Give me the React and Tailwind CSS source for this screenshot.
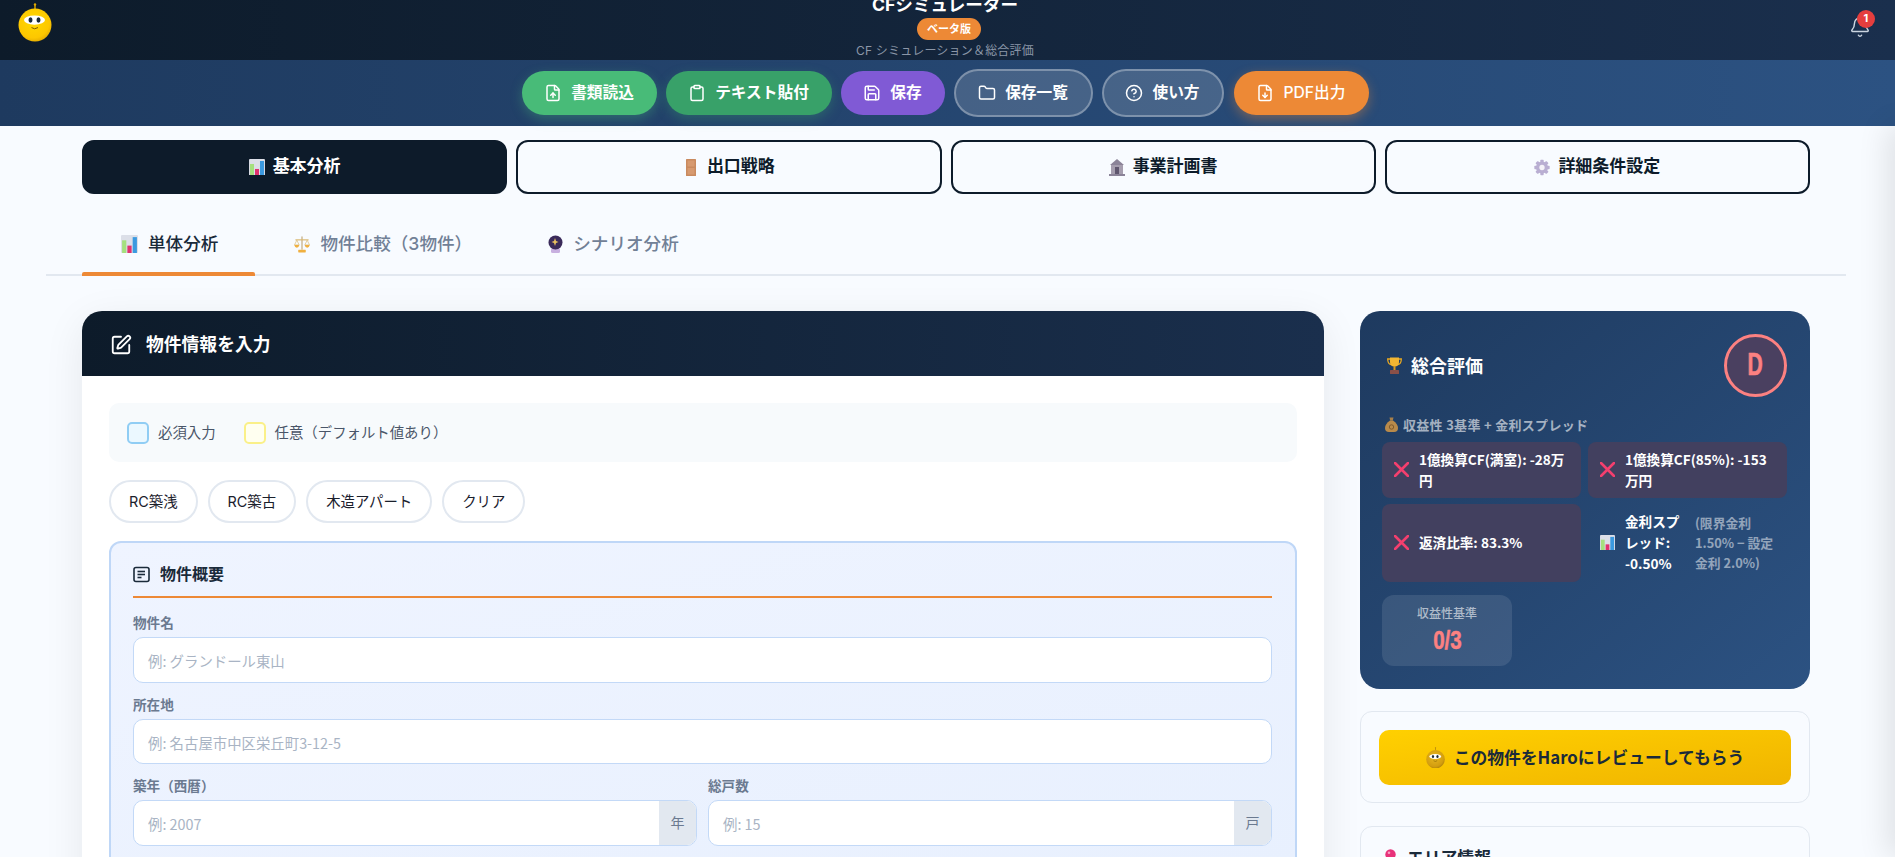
import React from "react";
import { FileUp, Clipboard, Save, Folder, CircleHelp, FileDown, Bell, SquarePen } from "lucide-react";

const jp = "font-['Inter','Noto_Sans_CJK_JP',sans-serif]";
const noto = "font-['Noto_Sans_CJK_JP',sans-serif]";
const narrow = "font-['Liberation_Sans',sans-serif]";

function Haro({ size = 34, dark = false }) {
  const id = dark ? "haroD" : "haroL";
  return (
    <svg width={size} height={size * 1.15} viewBox="0 0 34 39" aria-hidden="true">
      <defs>
        <radialGradient id={id} cx="0.45" cy="0.4" r="0.65">
          <stop offset="0" stopColor={dark ? "#e8b820" : "#ffd900"} />
          <stop offset="0.75" stopColor={dark ? "#d39d10" : "#fdc700"} />
          <stop offset="1" stopColor={dark ? "#a87c0a" : "#e0a800"} />
        </radialGradient>
      </defs>
      <line x1="17" y1="1" x2="17" y2="6" stroke={dark ? "#b88a10" : "#e0a800"} strokeWidth="1.4" />
      <circle cx="17" cy="1.5" r="1.2" fill={dark ? "#b88a10" : "#e0a800"} />
      <circle cx="17" cy="22" r="16.5" fill={`url(#${id})`} />
      <ellipse cx="16.5" cy="17" rx="10.5" ry="4.6" fill="#fff" />
      <ellipse cx="12.5" cy="17" rx="2" ry="2.7" fill="#1a2a3a" />
      <ellipse cx="20.5" cy="17" rx="2" ry="2.7" fill="#1a2a3a" />
      <path d="M13.5 24.5 Q16.5 27 20 24.5" stroke="#7a5a00" strokeWidth="1" fill="none" />
    </svg>
  );
}

function ChartIcon({ w = 16 }) {
  return (
    <svg width={w} height={w * 1.06} viewBox="0 0 16 17" className="shrink-0" aria-hidden="true">
      <rect x="0" y="0" width="16" height="17" rx="1" fill="#dcdfe8" />
      <rect x="1" y="5" width="4" height="12" fill="#a5e07e" />
      <rect x="6" y="10" width="4" height="7" fill="#e0326f" />
      <rect x="11" y="2" width="4" height="15" fill="#3b9ae0" />
    </svg>
  );
}

function DoorIcon() {
  return (
    <svg width="16" height="17" viewBox="0 0 16 17" className="shrink-0" aria-hidden="true">
      <rect x="3" width="10" height="17" rx="0.5" fill="#c98a5f" />
      <rect x="4.5" y="1.5" width="7" height="6" fill="#d79a70" />
      <rect x="4.5" y="9" width="7" height="6.5" fill="#d79a70" />
    </svg>
  );
}

function BankIcon() {
  return (
    <svg width="16" height="17" viewBox="0 0 16 17" className="shrink-0" aria-hidden="true">
      <path d="M8 0 L15 6 H1 Z" fill="#8b8398" />
      <rect x="2" y="6" width="12" height="9" fill="#a59dae" />
      <rect x="6" y="8" width="4" height="7" fill="#5f566e" />
      <rect x="0" y="15" width="16" height="2" fill="#8b8398" />
    </svg>
  );
}

function GearIcon() {
  return (
    <svg width="16" height="17" viewBox="0 0 24 24" className="shrink-0" aria-hidden="true">
      <g fill="#b9aed2">
        <circle cx="12" cy="12" r="9" />
        <rect x="9.5" y="0.5" width="5" height="23" rx="1" />
        <rect x="9.5" y="0.5" width="5" height="23" rx="1" transform="rotate(45 12 12)" />
        <rect x="9.5" y="0.5" width="5" height="23" rx="1" transform="rotate(90 12 12)" />
        <rect x="9.5" y="0.5" width="5" height="23" rx="1" transform="rotate(135 12 12)" />
      </g>
      <circle cx="12" cy="12" r="4" fill="#f4f2f8" />
    </svg>
  );
}

function ScaleIcon() {
  return (
    <svg width="16" height="18" viewBox="0 0 17 18" className="shrink-0" aria-hidden="true">
      <rect x="7.8" y="1" width="1.4" height="14" fill="#c9b28a" />
      <rect x="1.5" y="4" width="14" height="1.2" fill="#d9b770" />
      <path d="M3 5 L0.5 10 H5.5 Z" fill="none" stroke="#d9b770" strokeWidth="0.7" />
      <path d="M14 5 L11.5 10 H16.5 Z" fill="none" stroke="#d9b770" strokeWidth="0.7" />
      <path d="M0.3 10 H5.7 Q5 13 3 13 Q1 13 0.3 10 Z" fill="#f0b040" />
      <path d="M11.3 10 H16.7 Q16 13 14 13 Q12 13 11.3 10 Z" fill="#f0b040" />
      <rect x="4.5" y="15" width="8" height="3" rx="0.5" fill="#f0b040" />
    </svg>
  );
}

function BallIcon() {
  return (
    <svg width="15" height="18" viewBox="0 0 15 18" className="shrink-0" aria-hidden="true">
      <rect x="3" y="13" width="9" height="5" rx="1.5" fill="#c8b0e0" />
      <circle cx="7.5" cy="7.5" r="7" fill="#3a2a5a" />
      <path d="M7 3 L8 6 L10.5 7 L8 8 L7 11 L6 8 L3.5 7 L6 6 Z" fill="#e8c060" />
    </svg>
  );
}

function TrophyIcon() {
  return (
    <svg width="15" height="17" viewBox="0 0 15 17" className="shrink-0" aria-hidden="true">
      <path d="M3 2 H0.7 Q0.7 7 4 7.5" fill="none" stroke="#e8a820" strokeWidth="1.3" />
      <path d="M12 2 H14.3 Q14.3 7 11 7.5" fill="none" stroke="#e8a820" strokeWidth="1.3" />
      <path d="M3 0.5 H12 V5 Q12 9.5 7.5 9.5 Q3 9.5 3 5 Z" fill="#f2b632" />
      <rect x="6.5" y="9" width="2" height="4" fill="#d89a20" />
      <rect x="3" y="13" width="9" height="4" rx="0.5" fill="#8a5048" />
    </svg>
  );
}

function BagIcon() {
  return (
    <svg width="13" height="15" viewBox="0 0 13 15" className="shrink-0" aria-hidden="true">
      <path d="M4.5 0.5 H8.5 L7.8 3.5 H5.2 Z" fill="#a8804a" />
      <path d="M5 3.5 H8 Q13 7 13 11 Q13 15 9 15 H4 Q0 15 0 11 Q0 7 5 3.5 Z" fill="#b98a4a" />
      <circle cx="6.5" cy="10" r="2.2" fill="none" stroke="#7a5528" strokeWidth="0.9" />
    </svg>
  );
}

function PinIcon() {
  return (
    <svg width="11" height="18" viewBox="0 0 11 18" className="shrink-0" aria-hidden="true">
      <line x1="5.5" y1="9" x2="5.5" y2="18" stroke="#9aa3b0" strokeWidth="1.4" />
      <circle cx="5.5" cy="5.5" r="5.2" fill="#e8327a" />
      <circle cx="4" cy="3.8" r="1.3" fill="#f8a0c4" />
    </svg>
  );
}

function OutlineIcon() {
  return (
    <svg width="17" height="17" viewBox="0 0 17 17" fill="none" stroke="#1a2a3a" strokeWidth="1.6" className="shrink-0" aria-hidden="true">
      <rect x="1" y="1.5" width="15" height="14" rx="2" />
      <line x1="4.5" y1="5.5" x2="12" y2="5.5" />
      <line x1="4.5" y1="8.5" x2="12" y2="8.5" />
      <line x1="4.5" y1="11.5" x2="8.5" y2="11.5" />
    </svg>
  );
}

function Cross() {
  return (
    <svg width="15" height="15" viewBox="0 0 15 15" className="shrink-0" aria-hidden="true">
      <path d="M1 1 L14 14 M14 1 L1 14" stroke="#f43f6e" strokeWidth="2.6" strokeLinecap="round" />
    </svg>
  );
}

function NavBtn({ icon: Icon, children, cls }) {
  return (
    <button className={`flex items-center justify-center gap-[9px] rounded-full text-white text-[15.7px] ${cls}`}>
      <Icon size={18} strokeWidth={2} />
      <span>{children}</span>
    </button>
  );
}

function MainTab({ icon, children, active }) {
  return (
    <button
      className={`h-[54px] rounded-xl border-2 border-[#0d1b2a] flex items-center justify-center gap-2 text-[17px] font-bold ${
        active ? "bg-[#0d1b2a] text-white" : "bg-[#f8fbff] text-[#0d1b2a]"
      }`}
    >
      {icon}
      <span>{children}</span>
    </button>
  );
}

function SubTab({ icon, children, active }) {
  return (
    <button
      className={`relative h-[62px] pl-[39px] pr-[37px] pt-[2px] flex items-center gap-[10px] text-[17.6px] font-medium ${
        active ? "text-[#1a2a3a]" : "text-[#718096]"
      }`}
    >
      {icon}
      <span>{children}</span>
      {active && <span className="absolute left-0 right-0 bottom-[-2px] h-1 rounded-t-[2px] bg-[#ed8936]" />}
    </button>
  );
}

function Field({ label, placeholder, suffix, h = "h-[46px]" }) {
  return (
    <div className="flex flex-col">
      <label className="text-[13.6px] font-bold leading-5 text-[#6b7a90] mb-[4px]">{label}</label>
      <div className={`flex ${h} rounded-[10px] bg-white border border-[#c3d9f7] overflow-hidden`}>
        <div className={`flex-1 flex items-center pl-[14px] pt-[2px] text-[14.4px] text-[#a9b4c4] ${noto}`}>{placeholder}</div>
        {suffix && (
          <div className="w-[37px] flex items-center justify-center bg-[#e2e8f0] text-sm text-[#6b7a90]">{suffix}</div>
        )}
      </div>
    </div>
  );
}

function Fail({ children, cls = "" }) {
  return (
    <div className={`flex items-center gap-[10px] rounded-lg bg-[#42405f] px-3 text-[13.6px] font-bold leading-[21px] text-white ${cls}`}>
      <Cross />
      <span>{children}</span>
    </div>
  );
}

export default function App() {
  return (
    <div className={`relative h-[857px] overflow-hidden bg-[#f8fbff] ${jp}`}>
      <header className="h-[60px] overflow-hidden bg-gradient-to-r from-[#0d1b2a] to-[#1a2f4d] flex items-center justify-between pl-[18px] pr-[22px]">
        <div className="w-[34px] -mt-[14px]">
          <Haro />
        </div>
        <div className="flex flex-col items-center mr-[11px] -mt-[6px]">
          <div className="text-[17.6px] leading-[26px] font-bold text-white">CFシミュレーター</div>
          <div className="ml-2 h-[22px] w-[64px] flex items-center justify-center rounded-full bg-[#ed8936] text-[11px] font-bold text-white">ベータ版</div>
          <div className="text-xs leading-[22px] tracking-[0.2px] text-[#8b97a8]">CF シミュレーション＆総合評価</div>
        </div>
        <div className="relative w-[24px] h-[24px] -mt-[5px]">
          <Bell size={22} strokeWidth={1.6} className="text-[#cbd5e0]" />
          <span className="absolute -top-[6px] left-[8px] w-[18px] h-[18px] rounded-full bg-[#e53e3e] text-white text-[11px] font-bold flex items-center justify-center">1</span>
        </div>
      </header>

      <nav className="h-[66px] pr-[5px] bg-gradient-to-r from-[#1e3a5f] to-[#2c5282] flex items-center justify-center gap-[9px]">
        <NavBtn icon={FileUp} cls="w-[135px] h-[44px] font-bold bg-[#48bb78] shadow-[0_4px_12px_rgba(72,187,120,0.35)]">書類読込</NavBtn>
        <NavBtn icon={Clipboard} cls="w-[166px] h-[44px] font-bold bg-[#38a169] shadow-[0_4px_12px_rgba(56,161,105,0.35)]">テキスト貼付</NavBtn>
        <NavBtn icon={Save} cls="w-[104px] h-[44px] font-bold bg-[#805ad5]">保存</NavBtn>
        <NavBtn icon={Folder} cls="w-[139px] h-[48px] font-bold bg-white/15 border-2 border-white/30">保存一覧</NavBtn>
        <NavBtn icon={CircleHelp} cls="w-[122px] h-[48px] font-bold bg-white/15 border-2 border-white/30">使い方</NavBtn>
        <NavBtn icon={FileDown} cls="w-[135px] h-[44px] font-medium ml-[1px] bg-[#ed8936] shadow-[0_4px_12px_rgba(237,137,54,0.4)]">PDF出力</NavBtn>
      </nav>

      <main className="w-[1892px]">
        <div className="px-[82px] pt-[14px] grid grid-cols-4 gap-[9px]">
          <MainTab icon={<ChartIcon />} active>基本分析</MainTab>
          <MainTab icon={<DoorIcon />}>出口戦略</MainTab>
          <MainTab icon={<BankIcon />}>事業計画書</MainTab>
          <MainTab icon={<GearIcon />}>詳細条件設定</MainTab>
        </div>

        <div className="mx-[46px] mt-[18px] pl-[36px] flex border-b-2 border-[#e2e8f0]">
          <SubTab icon={<ChartIcon w={17} />} active>単体分析</SubTab>
          <SubTab icon={<ScaleIcon />}>物件比較（3物件）</SubTab>
          <SubTab icon={<BallIcon />}>シナリオ分析</SubTab>
        </div>

        <div className="px-[82px] pt-[35px] flex gap-[36px] items-start">
          <section className="w-[1242px] shrink-0 rounded-t-[20px] bg-white shadow-[0_10px_40px_rgba(0,0,0,0.08)]">
            <div className="h-[65px] pt-[3px] rounded-t-[20px] bg-gradient-to-r from-[#0d1b2a] to-[#1a2f4d] px-[28px] flex items-center gap-[14px] text-white">
              <SquarePen size={22} strokeWidth={2} />
              <h2 className="text-[17.8px] font-bold">物件情報を入力</h2>
            </div>
            <div className="px-[27px] pt-[27px] pb-6">
              <div className="h-[59px] pt-[1px] rounded-[10px] bg-[#f7fafc] px-[18px] flex items-center gap-[28px] text-[14.4px] text-[#4a5568]">
                <div className="flex items-center gap-[9px]">
                  <span className="w-[22px] h-[22px] rounded-[5px] border-2 border-[#90cdf4] bg-[#ebf8ff]" />
                  <span>必須入力</span>
                </div>
                <div className="flex items-center gap-[9px]">
                  <span className="w-[22px] h-[22px] rounded-[5px] border-2 border-[#faf089] bg-[#fffff0]" />
                  <span>任意（デフォルト値あり）</span>
                </div>
              </div>

              <div className="mt-[18px] flex gap-[10px]">
                {["RC築浅", "RC築古", "木造アパート", "クリア"].map((t) => (
                  <button key={t} className="h-[43px] px-[18px] pt-[1px] rounded-full border-2 border-[#e2e8f0] bg-white text-[14.4px] text-[#1a202c]">{t}</button>
                ))}
              </div>

              <div className="mt-[18px] rounded-xl border-2 border-[#bfd7f7] bg-gradient-to-br from-[#eff4ff] to-[#e8f0fe] pl-[22px] pr-[23px] pt-[20px] pb-6">
                <div className="h-[35px] pb-[11px] border-b-2 border-[#ed8936] flex items-center gap-[10px] text-[#1a2a3a]">
                  <OutlineIcon />
                  <h3 className="text-base font-bold">物件概要</h3>
                </div>
                <div className="mt-[15px] flex flex-col gap-[12px]">
                  <Field label="物件名" placeholder="例: グランドール東山" />
                  <Field label="所在地" placeholder="例: 名古屋市中区栄丘町3-12-5" h="h-[45px]" />
                  <div className="grid grid-cols-2 gap-[11px]">
                    <Field label="築年（西暦）" placeholder="例: 2007" suffix="年" />
                    <Field label="総戸数" placeholder="例: 15" suffix="戸" />
                  </div>
                </div>
              </div>
            </div>
          </section>

          <aside className={`w-[450px] shrink-0 flex flex-col gap-[22px] ${noto}`}>
            <div className="h-[378px] rounded-[20px] bg-gradient-to-br from-[#1e3a5f] to-[#2c5282] pl-[22px] pr-[23px] pt-[23px] text-white">
              <div className="flex items-center justify-between">
                <h2 className="pl-[5px] text-[18px] font-bold flex items-center gap-[9px]"><TrophyIcon />総合評価</h2>
                <div className="w-[63px] h-[63px] rounded-full border-[3px] border-[#fc8181] bg-[#4a4060] flex items-center justify-center">
                  <span className={`text-[31px] font-bold text-[#fc8181] scale-x-[0.68] [-webkit-text-stroke:0.7px_#fc8181] ${narrow}`}>D</span>
                </div>
              </div>
              <div className="mt-[18px] pl-[3px] text-[13px] tracking-[0.3px] font-bold text-white/60 flex items-center gap-[5px]"><BagIcon />収益性 3基準 + 金利スプレッド</div>
              <div className="mt-[7px] grid grid-cols-2 gap-x-[7px] gap-y-[6px]">
                <Fail cls="h-[56px]">1億換算CF(満室): -28万円</Fail>
                <Fail cls="h-[56px]">1億換算CF(85%): -153万円</Fail>
                <Fail cls="h-[78px]">返済比率: 83.3%</Fail>
                <div className="h-[78px] flex items-center pl-3 text-[13.6px] font-bold leading-[21px]">
                  <span className="mr-[10px] shrink-0"><ChartIcon w={15} /></span>
                  <span className="w-[58px] shrink-0">金利スプレッド: -0.50%</span>
                  <span className="ml-[12px] w-[80px] shrink-0 text-[12.8px] leading-[20px] font-bold text-white/50">(限界金利 1.50% − 設定金利 2.0%)</span>
                </div>
              </div>
              <div className="mt-[13px] w-[130px] h-[71px] rounded-xl bg-white/10 flex flex-col items-center justify-center">
                <div className="text-xs text-white/60 font-medium">収益性基準</div>
                <div className={`mt-[3px] text-[25px] leading-8 font-bold text-[#fc8181] scale-x-[0.82] [-webkit-text-stroke:0.5px_#fc8181] ${narrow}`}>0/3</div>
              </div>
            </div>

            <div className="h-[92px] rounded-xl border border-[#e2e8f0] bg-[#f8fbff] px-[18px] pt-[18px]">
              <button className="w-full h-[55px] rounded-[10px] bg-gradient-to-br from-[#ffd000] to-[#f0b400] flex items-center justify-center gap-[9px] text-[16.8px] font-bold text-[#1a2a3a]">
                <Haro size={19} dark />
                <span>この物件をHaroにレビューしてもらう</span>
              </button>
            </div>

            <div className="mt-[1px] rounded-xl border border-[#e2e8f0] bg-[#f8fbff] pl-[24px] pr-[22px] pt-[18px] pb-6">
              <h3 className="text-[16.8px] font-bold text-[#1a2a3a] flex items-center gap-[11px]"><PinIcon />エリア情報</h3>
            </div>
          </aside>
        </div>
      </main>

      <div className="absolute top-[126px] bottom-0 left-full w-10 shadow-[-8px_0_30px_rgba(0,0,0,0.1)]" />
    </div>
  );
}
